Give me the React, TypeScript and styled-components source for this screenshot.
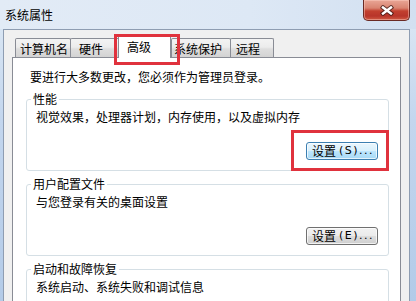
import React from "react";
import styled, { createGlobalStyle } from "styled-components";

const GlobalStyle = createGlobalStyle`
  html, body {
    margin: 0;
    padding: 0;
    background: #c9daef;
  }
  body {
    font-family: "Noto Sans CJK SC", "Noto Sans", sans-serif;
    font-size: 12px;
    color: #000;
  }
  * { box-sizing: border-box; }
`;

const Window = styled.div`
  position: relative;
  width: 416px;
  height: 301px;
  overflow: hidden;
  display: flex;
  flex-direction: column;
  background: linear-gradient(to bottom, #e4edf8 0px, #d8e5f3 29px, #c3d6ee 120px, #b3cbe8 301px);
`;

const TitleBar = styled.div`
  height: 29px;
  flex: none;
  display: flex;
  align-items: flex-start;
  justify-content: space-between;
  padding: 0 6px 0 5px;
  background: linear-gradient(to right, #e2ebf6 0%, #dde8f5 60%, #d2e0f1 100%);
`;

const Title = styled.div`
  padding-top: 8px;
  line-height: 14px;
  font-size: 12px;
  color: #000;
`;

const CloseButton = styled.div`
  width: 47px;
  height: 21px;
  display: flex;
  align-items: center;
  justify-content: center;
  border: 1px solid #6a2a24;
  border-top: none;
  border-radius: 0 0 5px 5px;
  background: linear-gradient(
    to bottom,
    #e9a696 0%,
    #d98471 40%,
    #c2402f 55%,
    #b8352a 80%,
    #cf5a43 100%
  );
  box-shadow: inset 0 0 0 1px rgba(255, 210, 200, 0.45);
`;

const Body = styled.div`
  flex: 1;
  min-height: 0;
  margin: 0 6px 0 3px;
  border: 1px solid #8e9db2;
  border-bottom: none;
  background: #f0f0f0;
  padding: 5px 8px 0 8px;
  display: flex;
  flex-direction: column;
`;

const TabRow = styled.div`
  position: relative;
  z-index: 1;
  height: 22px;
  flex: none;
  display: flex;
  align-items: flex-end;
  padding-left: 3px;
`;

const Tab = styled.div<{ $active?: boolean; $w: number; $pl: number; $ml: number }>`
  position: relative;
  width: ${(p) => p.$w}px;
  margin-left: ${(p) => p.$ml}px;
  height: ${(p) => (p.$active ? 23 : 19)}px;
  margin-bottom: ${(p) => (p.$active ? -1 : 0)}px;
  z-index: ${(p) => (p.$active ? 2 : 1)};
  padding-left: ${(p) => p.$pl}px;
  padding-top: ${(p) => (p.$active ? 4 : 3)}px;
  line-height: 14px;
  white-space: nowrap;
  border: 1px solid #898c95;
  border-bottom: none;
  border-radius: 2px 2px 0 0;
  background: ${(p) =>
    p.$active
      ? "#ffffff"
      : "linear-gradient(to bottom, #f3f3f3 0%, #ececec 45%, #dedede 55%, #d3d3d3 100%)"};
`;

const Panel = styled.div`
  flex: 1;
  background: #ffffff;
  border: 1px solid #898c95;
  border-bottom: none;
  padding: 12px 11px 0 13px;
  display: flex;
  flex-direction: column;
`;

const Intro = styled.div`
  margin-left: 4px;
  line-height: 14px;
  white-space: nowrap;
`;

const Group = styled.fieldset`
  margin: 6px 0 0 0;
  min-width: 0;
  flex: none;
  border: 1px solid #d5dfe5;
  border-radius: 3px;
  padding: 0 10px 10px 9px;
  display: flex;
  flex-direction: column;
  &:first-of-type {
    margin-top: 8px;
  }
`;

const Legend = styled.legend`
  margin-left: -5px;
  padding: 0 2px;
  line-height: 14px;
  height: 14px;
  font-size: 12px;
`;

const GroupText = styled.div`
  margin-top: 4px;
  line-height: 14px;
  white-space: nowrap;
`;

const ButtonRow = styled.div`
  margin-top: 18px;
  display: flex;
  justify-content: flex-end;
`;

const Button = styled.div<{ $focused?: boolean }>`
  width: 72px;
  height: 18px;
  display: flex;
  align-items: center;
  justify-content: center;
  padding-left: 2px;
  border-radius: 3px;
  line-height: 14px;
  white-space: nowrap;
  border: 1px solid ${(p) => (p.$focused ? "#3c7fb1" : "#707070")};
  background: ${(p) =>
    p.$focused
      ? "linear-gradient(to bottom, #eaf6fd 0%, #d9f0fc 48%, #bee6fd 52%, #a7d9f5 100%)"
      : "linear-gradient(to bottom, #f2f2f2 0%, #ebebeb 48%, #dddddd 52%, #cfcfcf 100%)"};
  box-shadow: inset 0 0 0 1px rgba(255, 255, 255, 0.7);
`;

const Mnemonic = styled.span`
  margin-left: 3px;
  letter-spacing: 1.5px;
  font-family: "DejaVu Sans", sans-serif;
  font-size: 11px;
`;

const Highlight = styled.div<{ $x: number; $y: number; $w: number; $h: number }>`
  position: absolute;
  left: ${(p) => p.$x}px;
  top: ${(p) => p.$y}px;
  width: ${(p) => p.$w}px;
  height: ${(p) => p.$h}px;
  border: 3px solid #e0323d;
  z-index: 10;
  pointer-events: none;
`;

const tabs = [
  { label: "计算机名", w: 56, pl: 4, ml: 0 },
  { label: "硬件", w: 51, pl: 8, ml: -1 },
  { label: "高级", w: 53, pl: 8, ml: -3, active: true },
  { label: "系统保护", w: 60, pl: 2, ml: 0 },
  { label: "远程", w: 44, pl: 5, ml: -1 },
];

const groups = [
  { title: "性能", text: "视觉效果，处理器计划，内存使用，以及虚拟内存", key: "S", focused: true },
  { title: "用户配置文件", text: "与您登录有关的桌面设置", key: "E" },
  { title: "启动和故障恢复", text: "系统启动、系统失败和调试信息" },
];

const CloseIcon = () => (
  <svg width="14" height="11" viewBox="0 0 14 11">
    <g strokeLinecap="square">
      <path d="M3 2.5 L11 8.5 M11 2.5 L3 8.5" stroke="#3a1612" strokeWidth="4.4" strokeOpacity="0.75" />
      <path d="M3 2.5 L11 8.5 M11 2.5 L3 8.5" stroke="#ffffff" strokeWidth="2.4" />
    </g>
  </svg>
);

export default function App() {
  return (
    <>
      <GlobalStyle />
      <Window>
        <TitleBar>
          <Title>系统属性</Title>
          <CloseButton>
            <CloseIcon />
          </CloseButton>
        </TitleBar>
        <Body>
          <TabRow>
            {tabs.map((t) => (
              <Tab key={t.label} $active={t.active} $w={t.w} $pl={t.pl} $ml={t.ml}>
                {t.label}
              </Tab>
            ))}
          </TabRow>
          <Panel>
            <Intro>要进行大多数更改，您必须作为管理员登录。</Intro>
            {groups.map((g) => (
              <Group key={g.title}>
                <Legend>{g.title}</Legend>
                <GroupText>{g.text}</GroupText>
                {g.key && (
                  <ButtonRow>
                    <Button $focused={g.focused}>
                      设置<Mnemonic>({g.key})...</Mnemonic>
                    </Button>
                  </ButtonRow>
                )}
              </Group>
            ))}
          </Panel>
        </Body>
        <Highlight $x={114} $y={34} $w={66} $h={31} />
        <Highlight $x={291} $y={130} $w={98} $h={41} />
      </Window>
    </>
  );
}
